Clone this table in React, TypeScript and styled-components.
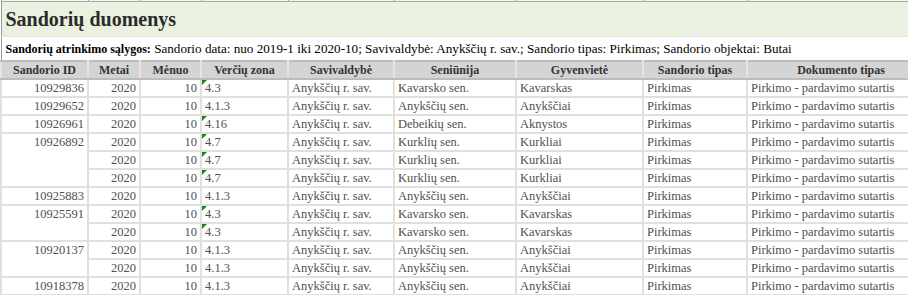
import * as React from 'react';
import styled, { createGlobalStyle } from 'styled-components';

const GlobalStyle = createGlobalStyle`
  html, body {
    margin: 0;
    padding: 0;
    background: #ffffff;
    overflow: hidden;
  }
  body {
    font-family: "Liberation Serif", "Times New Roman", serif;
  }
`;

type Deal = {
  zone: string;
  flagged: boolean;
  seniunija: string;
  gyvenviete: string;
};

type Transaction = {
  id: string;
  deals: Deal[];
};

const columns = [
  { title: 'Sandorio ID', width: 87 },
  { title: 'Metai', width: 52 },
  { title: 'Mėnuo', width: 61 },
  { title: 'Verčių zona', width: 87 },
  { title: 'Savivaldybė', width: 106 },
  { title: 'Seniūnija', width: 122 },
  { title: 'Gyvenvietė', width: 127 },
  { title: 'Sandorio tipas', width: 104 },
  { title: 'Dokumento tipas', width: 188 },
];

const kavarskas: Deal = { zone: '4.3', flagged: true, seniunija: 'Kavarsko sen.', gyvenviete: 'Kavarskas' };
const anyksciai: Deal = { zone: '4.1.3', flagged: false, seniunija: 'Anykščių sen.', gyvenviete: 'Anykščiai' };
const aknystos: Deal = { zone: '4.16', flagged: true, seniunija: 'Debeikių sen.', gyvenviete: 'Aknystos' };
const kurkliai: Deal = { zone: '4.7', flagged: true, seniunija: 'Kurklių sen.', gyvenviete: 'Kurkliai' };

const transactions: Transaction[] = [
  { id: '10929836', deals: [kavarskas] },
  { id: '10929652', deals: [anyksciai] },
  { id: '10926961', deals: [aknystos] },
  { id: '10926892', deals: [kurkliai, kurkliai, kurkliai] },
  { id: '10925883', deals: [anyksciai] },
  { id: '10925591', deals: [kavarskas, kavarskas] },
  { id: '10920137', deals: [anyksciai, anyksciai] },
  { id: '10918378', deals: [anyksciai] },
];

const Sheet = styled.table`
  border-collapse: collapse;
  table-layout: fixed;
  width: 934px;
  border-left: 1px solid #9a9a9a;
  font-family: "Liberation Serif", "Times New Roman", serif;
`;

const CutCell = styled.td`
  height: 1px;
  padding: 0;
  background: #f4f4f4;
  border: 1px solid #a8a8a8;
  border-top: none;
`;

const TitleCell = styled.td`
  height: 33px;
  padding: 1px 4px 0;
  background: #ebf1e0;
  border-bottom: 1px solid #e4e4e4;
  font-size: 20px;
  font-weight: bold;
  color: #2b2b2b;
  vertical-align: middle;
`;

const ConditionsCell = styled.td`
  height: 22px;
  padding: 1px 4px 0;
  font-size: 13.15px;
  color: #000000;
  white-space: nowrap;
  vertical-align: middle;
`;

const ConditionsLabel = styled.b`
  font-size: 12px;
  font-weight: bold;
`;

const HeaderCell = styled.th`
  height: 16px;
  padding: 0 3px;
  background: #d4d4d4;
  border-top: 2px solid #bcbcbc;
  border-bottom: 2px solid #bcbcbc;
  border-left: 2px solid #e4e4e4;
  border-right: 2px solid #e4e4e4;
  font-size: 12px;
  line-height: 16px;
  font-weight: bold;
  color: #333333;
  text-align: center;
  white-space: nowrap;
  overflow: hidden;
`;

const DataCell = styled.td<{ $align?: 'left' | 'right'; $flagged?: boolean }>`
  position: relative;
  height: 16px;
  padding: 0 3px;
  border: 2px solid #e0e0e0;
  font-size: 12.5px;
  line-height: 16px;
  color: #505050;
  text-align: ${(p) => p.$align ?? 'left'};
  vertical-align: top;
  white-space: nowrap;
  overflow: hidden;

  &::before {
    content: '';
    display: ${(p) => (p.$flagged ? 'block' : 'none')};
    position: absolute;
    top: 0;
    left: 0;
    border-top: 5px solid #128a12;
    border-right: 5px solid transparent;
  }
`;

const App: React.FC = () => (
  <>
    <GlobalStyle />
    <Sheet>
      <colgroup>
        {columns.map(({ title, width }) => (
          <col key={title} style={{ width }} />
        ))}
      </colgroup>
      <tbody>
        <tr>
          {columns.map(({ title }) => (
            <CutCell key={title} />
          ))}
        </tr>
        <tr>
          <TitleCell colSpan={columns.length}>Sandorių duomenys</TitleCell>
        </tr>
        <tr>
          <ConditionsCell colSpan={columns.length}>
            <ConditionsLabel>Sandorių atrinkimo sąlygos:</ConditionsLabel> Sandorio data: nuo
            2019-1 iki 2020-10; Savivaldybė: Anykščių r. sav.; Sandorio tipas: Pirkimas; Sandorio
            objektai: Butai
          </ConditionsCell>
        </tr>
        <tr>
          {columns.map(({ title }) => (
            <HeaderCell key={title}>{title}</HeaderCell>
          ))}
        </tr>
        {transactions.map(({ id, deals }) =>
          deals.map((deal, i) => (
            <tr key={`${id}-${i}`}>
              {i === 0 && (
                <DataCell $align="right" rowSpan={deals.length}>
                  {id}
                </DataCell>
              )}
              <DataCell $align="right">2020</DataCell>
              <DataCell $align="right">10</DataCell>
              <DataCell $flagged={deal.flagged}>{deal.zone}</DataCell>
              <DataCell>Anykščių r. sav.</DataCell>
              <DataCell>{deal.seniunija}</DataCell>
              <DataCell>{deal.gyvenviete}</DataCell>
              <DataCell>Pirkimas</DataCell>
              <DataCell>Pirkimo - pardavimo sutartis</DataCell>
            </tr>
          )),
        )}
      </tbody>
    </Sheet>
  </>
);

export default App;
